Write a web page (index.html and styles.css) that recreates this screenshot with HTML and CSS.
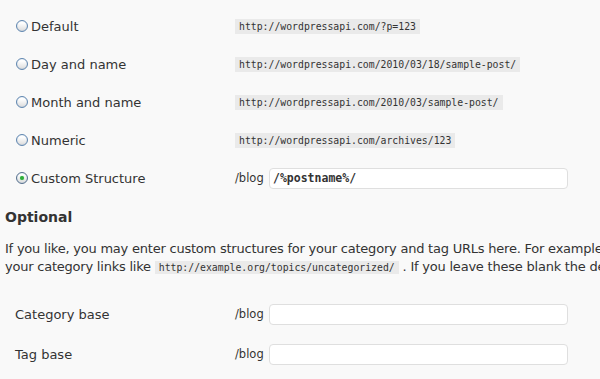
FILE: index.html
```html
<!DOCTYPE html>
<html lang="en">
<head>
  <meta charset="UTF-8">
  <title>Permalink Settings</title>
  <link rel="stylesheet" href="styles.css">
</head>
<body>
  <div class="wrap">
    <div class="row">
      <label class="label"><span class="radio"></span>Default</label>
      <div class="value"><code class="code">http://wordpressapi.com/?p=123</code></div>
    </div>
    <div class="row">
      <label class="label"><span class="radio"></span>Day and name</label>
      <div class="value"><code class="code">http://wordpressapi.com/2010/03/18/sample-post/</code></div>
    </div>
    <div class="row">
      <label class="label"><span class="radio"></span>Month and name</label>
      <div class="value"><code class="code">http://wordpressapi.com/2010/03/sample-post/</code></div>
    </div>
    <div class="row">
      <label class="label"><span class="radio"></span>Numeric</label>
      <div class="value"><code class="code">http://wordpressapi.com/archives/123</code></div>
    </div>
    <div class="row">
      <label class="label"><span class="radio checked"></span>Custom Structure</label>
      <div class="value"><span class="prefix">/blog</span><input class="input mono" type="text" value="/%postname%/"></div>
    </div>

    <h3 class="h3">Optional</h3>
    <p class="p">
      <span class="line">If you like, you may enter custom structures for your category and tag URLs here. For example, using <code class="code">topics</code> as your category base would make</span><br>
      <span class="line">your category links like <code class="code">http://example.org/topics/uncategorized/</code> . If you leave these blank the defaults will be used.</span>
    </p>

    <div class="row row2 first">
      <label class="label">Category base</label>
      <div class="value"><span class="prefix">/blog</span><input class="input" type="text"></div>
    </div>
    <div class="row row2">
      <label class="label">Tag base</label>
      <div class="value"><span class="prefix">/blog</span><input class="input" type="text"></div>
    </div>
  </div>
</body>
</html>
```

FILE: styles.css
```css
html, body {
  margin: 0;
  padding: 0;
  background: #f9f9f9;
  overflow: hidden;
}
.wrap {
  width: 600px;
  padding-top: 7px;
  font-family: "DejaVu Sans", Verdana, sans-serif;
  font-size: 13px;
  color: #333;
}
.row {
  display: flex;
  align-items: center;
  height: 38px;
}
.row2 {
  height: 40px;
}
.row2.first {
  margin-top: 18px;
}
.label {
  width: 220px;
  padding-left: 15px;
  display: flex;
  align-items: center;
  white-space: nowrap;
}
.value {
  display: flex;
  align-items: center;
  white-space: nowrap;
}
.radio {
  width: 10px;
  height: 10px;
  margin-left: 1px;
  margin-right: 3px;
  border: 1px solid #5f86b0;
  border-radius: 50%;
  background: linear-gradient(#ffffff 20%, #dcdcdc);
  box-shadow: inset 0 0 1px #9fb6cf;
  display: flex;
  align-items: center;
  justify-content: center;
}
.radio.checked {
  border-color: #56708e;
}
.radio.checked::after {
  content: "";
  width: 4px;
  height: 4px;
  border-radius: 50%;
  background: #2fae3a;
  box-shadow: 0 0 1px #7ad17f;
}
.code {
  background: #eaeaea;
  padding: 1px 4px;
  font-family: "DejaVu Sans Mono", "Liberation Mono", monospace;
  font-size: 9.8px;
  line-height: 13px;
  letter-spacing: 0;
  color: #333;
}
.prefix {
  font-size: 11.5px;
  width: 29px;
  margin-right: 5px;
}
.input {
  box-sizing: border-box;
  width: 299px;
  height: 21px;
  margin: 0;
  padding: 0 3px;
  border: 1px solid #dfdfdf;
  border-radius: 4px;
  background: #fff;
  outline: none;
}
.mono {
  font-family: "DejaVu Sans Mono", monospace;
  font-size: 11.5px;
  font-weight: bold;
  color: #333;
}
.h3 {
  margin: 10px 0 0 5px;
  font-size: 14px;
  line-height: 20px;
  font-weight: bold;
  color: #333;
}
.p {
  margin: 13px 0 0 5px;
  line-height: 18px;
  letter-spacing: -0.22px;
  white-space: nowrap;
}
.line {
  white-space: nowrap;
}
```
